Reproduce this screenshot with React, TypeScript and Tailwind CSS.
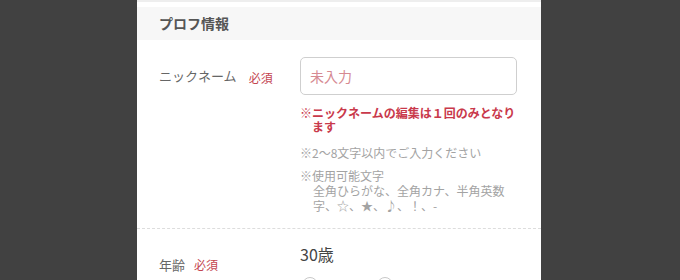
export default function App() {
  const font = { fontFamily: '"Noto Sans CJK JP", "Noto Sans", sans-serif' };
  return (
    <div className="h-[280px] w-[680px] overflow-hidden bg-[#414141]" style={font}>
      <div className="ml-[137px] h-full w-[404px] bg-white">
        {/* top strip */}
        <div className="h-[2px] bg-[#eeeeee]" />
        <div className="h-[5px] bg-white" />

        {/* section header */}
        <div className="flex h-[33px] items-center bg-[#f7f7f7] pl-[22px] text-[14px] font-bold text-[#555]">
          プロフ情報
        </div>

        {/* nickname */}
        <div className="flex border-b border-dashed border-[#dddddd] pt-[17px] pb-[15px]">
          <div className="flex h-[38px] w-[163px] items-center pl-[22px]">
            <span className="text-[13px] text-[#666]">ニックネーム</span>
            <span className="ml-[12px] mt-[3px] text-[12px] text-[#c4454f]">必須</span>
          </div>
          <div className="w-[217px]">
            <input
              readOnly
              placeholder="未入力"
              className="block h-[38px] w-full rounded-[5px] border border-[#cfcfcf] bg-white px-[9px] text-[14px] outline-none placeholder:text-[#d68a92]"
            />
            <p className="mt-[11px] pl-[12px] -indent-[12px] text-[12px] leading-[14px] font-bold text-[#c9394b]">
              ※ニックネームの編集は１回のみとなり
              <br />
              ます
            </p>
            <p className="mt-[12px] text-[12px] leading-[14px] text-[#a3a3a3]">
              ※2〜8文字以内でご入力ください
            </p>
            <p className="mt-[8px] pl-[13px] -indent-[13px] text-[12px] leading-[15px] text-[#a3a3a3]">
              ※使用可能文字
              <br />
              全角ひらがな、全角カナ、半角英数
              <br />
              字、☆、★、♪、！、-
            </p>
          </div>
        </div>

        {/* age */}
        <div className="flex pt-[15px]">
          <div className="flex w-[163px] items-baseline pt-[11px] pl-[22px]">
            <span className="text-[13px] leading-[20px] text-[#666]">年齢</span>
            <span className="ml-[9px] text-[12px] text-[#c4454f]">必須</span>
          </div>
          <div className="w-[217px]">
            <div className="text-[16px] leading-[20px] text-[#444]">30歳</div>
            <div className="mt-[13px] flex">
              <span className="ml-[2px] h-[16px] w-[16px] rounded-full border border-[#c8c8c8]" />
              <span className="ml-[59px] h-[16px] w-[16px] rounded-full border border-[#c8c8c8]" />
            </div>
          </div>
        </div>
      </div>
    </div>
  );
}
